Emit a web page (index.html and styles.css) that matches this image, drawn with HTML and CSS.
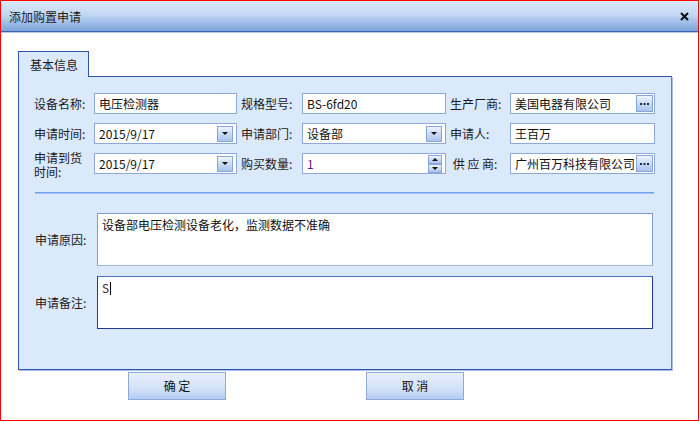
FILE: index.html
```html
<!DOCTYPE html>
<html>
<head>
    <meta charset="utf-8">
    <link rel="stylesheet" href="styles.css">
</head>
<body>

<div class="window">
    <div class="titlebar">
        <span class="title">添加购置申请</span>
        <svg class="close" width="9" height="9" viewBox="0 0 9 9">
            <path d="M1 1 L8 8 M8 1 L1 8" stroke="#111" stroke-width="2"/>
        </svg>
    </div>

    <div class="tabs">
        <div class="tab">基本信息</div>
        <div class="panel">
            <div class="grid">
                <div class="label">设备名称:</div>
                <div class="field">电压检测器</div>
                <div class="label pad">规格型号:</div>
                <div class="field">BS-6fd20</div>
                <div class="label pad">生产厂商:</div>
                <div class="field combo">
                    <span class="val">美国电器有限公司</span>
                    <span class="btn dots">
                        <svg width="9" height="2" viewBox="0 0 9 2"><rect x="0" y="0" width="2" height="2" fill="#1b2a55"/><rect x="3.5" y="0" width="2" height="2" fill="#1b2a55"/><rect x="7" y="0" width="2" height="2" fill="#1b2a55"/></svg>
                    </span>
                </div>

                <div class="label">申请时间:</div>
                <div class="field combo">
                    <span class="val">2015/9/17</span>
                    <span class="btn drop"><i class="tri"></i></span>
                </div>
                <div class="label pad">申请部门:</div>
                <div class="field combo">
                    <span class="val">设备部</span>
                    <span class="btn drop"><i class="tri"></i></span>
                </div>
                <div class="label pad">申请人:</div>
                <div class="field">王百万</div>

                <div class="label two">申请到货<br>时间:</div>
                <div class="field combo">
                    <span class="val">2015/9/17</span>
                    <span class="btn drop"><i class="tri"></i></span>
                </div>
                <div class="label pad">购买数量:</div>
                <div class="field combo">
                    <span class="val num">1</span>
                    <span class="spin">
                        <span class="btn up"><i class="tri tri-up"></i></span>
                        <span class="btn down"><i class="tri"></i></span>
                    </span>
                </div>
                <div class="label pad">&nbsp;供 应 商:</div>
                <div class="field combo">
                    <span class="val">广州百万科技有限公司</span>
                    <span class="btn dots">
                        <svg width="9" height="2" viewBox="0 0 9 2"><rect x="0" y="0" width="2" height="2" fill="#1b2a55"/><rect x="3.5" y="0" width="2" height="2" fill="#1b2a55"/><rect x="7" y="0" width="2" height="2" fill="#1b2a55"/></svg>
                    </span>
                </div>
            </div>

            <div class="sep"></div>

            <div class="memo-row">
                <div class="label memo-label">申请原因:</div>
                <div class="memo">设备部电压检测设备老化，监测数据不准确</div>
            </div>
            <div class="memo-row">
                <div class="label memo-label">申请备注:</div>
                <div class="memo focus">S<span class="caret"></span></div>
            </div>
        </div>
    </div>

    <div class="actions">
        <div class="button">确 定</div>
        <div class="button">取 消</div>
    </div>
</div>

</body>
</html>
```

FILE: styles.css
```css
body {
  margin: 0;
  background: #fff;
  font-family: "Noto Sans CJK SC", "Liberation Sans", sans-serif;
  font-size: 12px;
  color: #1a1a1a;
}
* {
  box-sizing: border-box;
}
.window {
  width: 699px;
  height: 421px;
  border: 1px solid #f00;
  background: #fff;
}

.titlebar {
  height: 31px;
  display: flex;
  align-items: center;
  justify-content: space-between;
  padding: 0 9px 0 8px;
  background: linear-gradient(#dce9fa, #c3d8f4 45%, #7ba3dc);
  border-bottom: 1px solid #3a62b3;
  box-shadow: 0 1px 0 #b7cbea;
}
.title {
  font-size: 12px;
  color: #1b1b1b;
}
.close {
  display: block;
}

.tabs {
  margin: 19px 0 0 17px;
  width: 654px;
}
.tab {
  position: relative;
  z-index: 1;
  width: 71px;
  height: 26px;
  margin-bottom: -1px;
  padding: 5px 0 0 11px;
  background: #dbe9fd;
  border: 1px solid #2f55ae;
  border-bottom: none;
  line-height: 16px;
}
.panel {
  height: 294px;
  padding: 16px 0 0 15px;
  background: #dbe9fd;
  border: 1px solid #2f55ae;
  border-right-color: #5d82c6;
  box-shadow: 1px 1px 0 #a8bfe6;
}

.grid {
  display: grid;
  grid-template-columns: 60px 143px 65px 144px 64px 145px;
  grid-template-rows: 21px 21px 21px;
  row-gap: 9px;
}
.label {
  align-self: center;
  white-space: nowrap;
  line-height: 14px;
}
.label.pad {
  padding-left: 4px;
}
.label.two {
  align-self: start;
  line-height: 14px;
  margin-top: -2px;
}

.field {
  height: 21px;
  background: #fff;
  border: 1px solid #8ea8d8;
  padding: 0 3px 0 4px;
  line-height: 19px;
  white-space: nowrap;
  overflow: hidden;
  color: #111;
}
.field.combo {
  display: flex;
  align-items: center;
  padding-right: 1px;
}
.val {
  flex: 1;
  min-width: 0;
  overflow: hidden;
}
.num {
  color: #5a1a7c;
}

.btn {
  display: flex;
  flex: none;
  align-items: center;
  justify-content: center;
  background: linear-gradient(#eef4fd, #c9dbf5 50%, #a9c4ef);
  border: 1px solid #8aa6d8;
}
.drop {
  width: 16px;
  height: 16px;
  margin-right: 2px;
}
.dots {
  width: 17px;
  height: 17px;
}
.dots svg {
  display: block;
}
.tri {
  display: block;
  width: 0;
  height: 0;
  border-left: 3px solid transparent;
  border-right: 3px solid transparent;
  border-top: 3px solid #111;
}
.tri-up {
  border-top: none;
  border-bottom: 3px solid #111;
}
.spin {
  display: flex;
  flex-direction: column;
  margin-right: 2px;
}
.spin .btn {
  width: 14px;
  height: 9px;
}

.sep {
  margin: 18px 0 0 1px;
  width: 619px;
  border-top: 1px solid #6c9cea;
  box-shadow: 0 1px 0 #a6c5f4;
}

.memo-row {
  display: flex;
  align-items: center;
  margin-top: 20px;
}
.memo-row + .memo-row {
  margin-top: 10px;
}
.memo-label {
  width: 63px;
  padding-left: 1px;
}
.memo {
  width: 556px;
  height: 53px;
  background: #fff;
  border: 1px solid #7f9bd6;
  border-bottom-color: #a3b9e3;
  padding: 3px 4px;
  line-height: 16px;
  color: #111;
}
.memo.focus {
  border-color: #203c92;
  border-top-color: #4e6fbd;
  color: #4a3020;
}
.caret {
  display: inline-block;
  width: 1px;
  height: 13px;
  margin-left: 1px;
  vertical-align: -2px;
  background: #000;
}

.actions {
  display: flex;
  gap: 140px;
  margin: 2px 0 0 127px;
}
.button {
  width: 98px;
  height: 28px;
  border: 1px solid #8ea9da;
  background: linear-gradient(#e6effc, #d3e2f8 60%, #b3cbf1);
  text-align: center;
  line-height: 26px;
  color: #111;
}
```
